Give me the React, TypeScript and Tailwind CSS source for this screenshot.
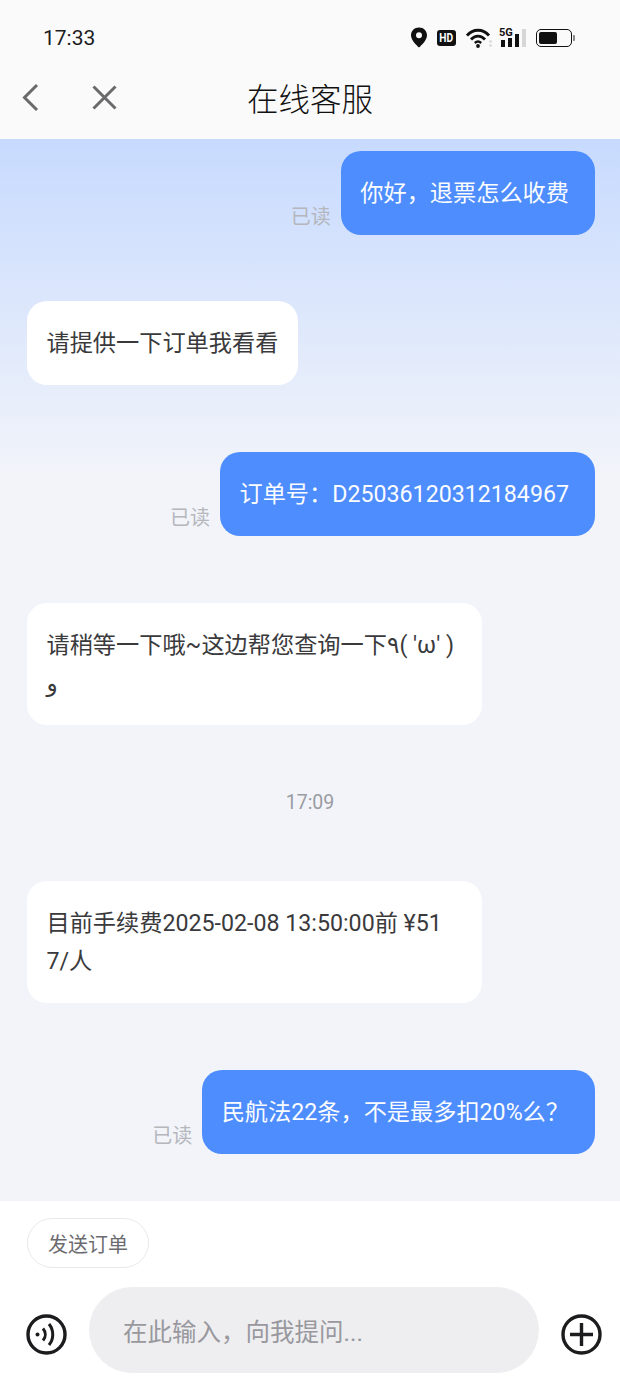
import React from "react";

type Message = {
  id: number;
  side: "left" | "right";
  text: string;
  top: string;
};

const messages: Message[] = [
  {id: 1, side: "right", text: "你好，退票怎么收费", top: "mt-[12px]"},
  {id: 2, side: "left", text: "请提供一下订单我看看", top: "mt-[66px]"},
  {id: 3, side: "right", text: "订单号：D25036120312184967", top: "mt-[67px]"},
  {id: 4, side: "left", text: "请稍等一下哦~这边帮您查询一下٩( 'ω' )و", top: "mt-[67px]"},
];

const Bubble = ({side, text}: {side: "left" | "right"; text: string}) => (
  <div
    className={`rounded-[20px] pl-[19.5px] pt-[23px] pb-[23px] text-[23.2px] leading-[38px] break-all ${
      side === "right"
        ? "bg-[#4d8dfe] text-[#fbfcff] pr-[26px]"
        : "bg-white text-[#3a3a3c] pr-[19.5px] max-w-[455px]"
    }`}
  >
    {text}
  </div>
);

const Row = ({side, text, top}: {side: "left" | "right"; text: string; top: string}) =>
  side === "right" ? (
    <div className={`flex justify-end items-end pr-[25px] ${top}`}>
      <span className="text-[20px] leading-[28px] text-[#b5b7bd] mr-[10px] mb-[4px]">已读</span>
      <Bubble side={side} text={text} />
    </div>
  ) : (
    <div className={`flex pl-[27px] ${top}`}>
      <Bubble side={side} text={text} />
    </div>
  );

const StatusIcons = () => (
  <div className="flex items-center">
    <svg width="18" height="21" viewBox="0 0 18 21" className="mr-[9px]">
      <path
        fillRule="evenodd"
        d="M9 0.5C4.3 0.5 1 4 1 8.3c0 4.8 5 9.6 8 12.2 3-2.6 8-7.4 8-12.2C17 4 13.7 0.5 9 0.5ZM9 11.2a3 3 0 1 1 0-6 3 3 0 0 1 0 6Z"
        fill="#111"
      />
    </svg>
    <div className="w-[19px] h-[16px] rounded-[3px] bg-[#111] text-white text-[12px] leading-[16px] font-bold text-center mr-[10px]">
      <span className="inline-block scale-x-[0.85]">HD</span>
    </div>
    <svg width="27" height="20" viewBox="0 0 27 20" className="mr-[6px]">
      <path d="M1 7.5C7 0.5 17 0.5 23 7.5" fill="none" stroke="#111" strokeWidth="2.8" />
      <path d="M5 11.5C9 7 15 7 19 11.5" fill="none" stroke="#111" strokeWidth="2.8" />
      <path d="M8.8 15C10.8 13.2 13.2 13.2 15.2 15" fill="none" stroke="#111" strokeWidth="2.4" />
      <circle cx="12" cy="18" r="1.9" fill="#111" />
      <circle cx="24.5" cy="13.5" r="1.3" fill="#d5d5d5" />
      <circle cx="24.5" cy="17.5" r="1.3" fill="#d5d5d5" />
    </svg>
    <div className="relative w-[27px] h-[18px] mr-[10px]">
      <span className="absolute left-0 top-[-3px] text-[11px] leading-[13px] font-bold text-[#111]">
        5G
      </span>
      <div className="absolute bottom-0 left-[2px] flex items-end gap-[3px]">
        <div className="w-[4px] h-[7px] bg-[#111]" />
        <div className="w-[4px] h-[9px] bg-[#111]" />
        <div className="w-[4px] h-[13px] bg-[#111]" />
        <div className="w-[4px] h-[18px] bg-[#d6d6d6]" />
      </div>
    </div>
    <div className="flex items-center">
      <div className="w-[36px] h-[18px] rounded-[5px] border-[1.5px] border-[#111] p-[2px]">
        <div className="w-[18px] h-full rounded-[2px] bg-[#111]" />
      </div>
      <div className="w-[2px] h-[6px] bg-[#888] ml-[1px] rounded-r-[1px]" />
    </div>
  </div>
);

export default function App() {
  return (
    <div
      className="w-[620px] h-[1386px] flex flex-col overflow-hidden bg-white"
      style={{fontFamily: 'Roboto, "Noto Sans CJK SC", "DejaVu Sans", sans-serif'}}
    >
      {/* top bars */}
      <div className="h-[139px] shrink-0 bg-[#fafafa] flex flex-col">
        <div className="h-[75px] flex items-center justify-between pl-[43px] pr-[45px]">
          <span className="text-[21px] text-[#1c1c1e] pt-[2px]">17:33</span>
          <StatusIcons />
        </div>
        <div className="relative flex-1 flex items-center justify-center">
          <div className="absolute left-[21px] top-[8px] flex items-center">
            <svg width="20" height="30" viewBox="0 0 20 30">
              <path d="M16 2 3.5 14.5 16 27" fill="none" stroke="#6a6a6c" strokeWidth="3" />
            </svg>
            <svg width="30" height="30" viewBox="0 0 30 30" className="ml-[49px]">
              <path d="M3.5 3.5l22 22M25.5 3.5l-22 22" fill="none" stroke="#6a6a6c" strokeWidth="3" />
            </svg>
          </div>
          <h1 className="text-[31.5px] font-light text-[#111] mb-[12px]">在线客服</h1>
        </div>
      </div>

      {/* chat */}
      <div className="flex-1 bg-gradient-to-b from-[#c7dafe] to-[#f2f4f9] to-[32%]">
        {messages.map((m) => (
          <Row key={m.id} side={m.side} text={m.text} top={m.top} />
        ))}
        <div className="mt-[64px] text-center text-[19.5px] leading-[28px] text-[#9a9ca3]">17:09</div>
        <Row side="left" top="mt-[64px]" text="目前手续费2025-02-08 13:50:00前 ¥517/人" />
        <Row side="right" top="mt-[67px]" text="民航法22条，不是最多扣20%么？" />
      </div>

      {/* footer */}
      <div className="h-[185px] shrink-0 bg-white">
        <div className="pl-[27px] pt-[17px]">
          <button className="w-[122px] h-[50px] rounded-full border border-[#e9e9ec] pt-[4px] text-[20px] text-[#6b6b70]">
            发送订单
          </button>
        </div>
        <div className="flex items-center mt-[19px] pl-[26px] pr-[18px]">
          <svg width="41" height="41" viewBox="0 0 41 41" className="mt-[8px]">
            <circle cx="20.5" cy="20.5" r="18.5" fill="none" stroke="#1c1c1e" strokeWidth="3.4" />
            <circle cx="11.5" cy="20.5" r="2" fill="#1c1c1e" />
            <path d="M17 14.5c3 3.6 3 8.4 0 12" fill="none" stroke="#1c1c1e" strokeWidth="3" />
            <path d="M23 10c5 6 5 15 0 21" fill="none" stroke="#1c1c1e" strokeWidth="3" />
          </svg>
          <div className="ml-[22px] w-[450px] h-[86px] rounded-[43px] bg-[#eeeef0] flex items-center pl-[34px] pt-[6px] text-[24.5px] text-[#98989e]">
            在此输入，向我提问...
          </div>
          <svg width="41" height="41" viewBox="0 0 41 41" className="ml-[22px] mt-[8px]">
            <circle cx="20.5" cy="20.5" r="18.5" fill="none" stroke="#1c1c1e" strokeWidth="3.4" />
            <path d="M9 20.5h23M20.5 9v23" fill="none" stroke="#1c1c1e" strokeWidth="3.4" />
          </svg>
        </div>
      </div>
    </div>
  );
}
